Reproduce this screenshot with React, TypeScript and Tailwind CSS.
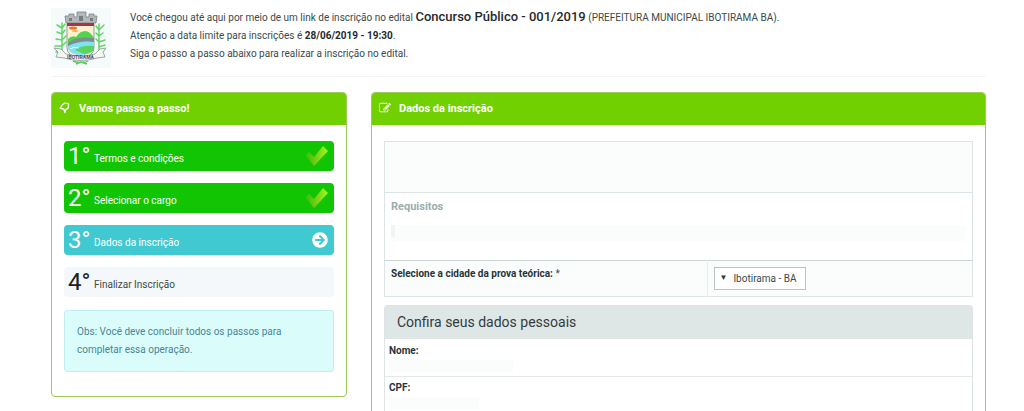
import type { ReactNode } from "react";
import clsx from "clsx";
import { FaArrowCircleRight } from "react-icons/fa";

type StepStatus = "done" | "current" | "pending";

const steps: { label: string; status: StepStatus }[] = [
  { label: "Termos e condições", status: "done" },
  { label: "Selecionar o cargo", status: "done" },
  { label: "Dados da inscrição", status: "current" },
  { label: "Finalizar Inscrição", status: "pending" },
];

export default function App() {
  return (
    <div className="min-h-screen bg-white pl-[51px] pr-[38px] font-['Roboto',sans-serif] text-[10px] text-[#3a4a4a]">
      <Header />
      <main className="flex items-start gap-6 pt-[15px]">
        <Panel
          title="Vamos passo a passo!"
          icon={<SignIcon />}
          className="w-[296px] shrink-0 pb-6"
        >
          <ol className="flex flex-col gap-3">
            {steps.map((step, index) => (
              <Step key={step.label} number={index + 1} {...step} />
            ))}
          </ol>
          <p className="mt-[13px] rounded-[3px] border border-[#c3eef0] bg-[#dafdfc] px-3 py-3 leading-[18px] text-[#4a8495]">
            Obs: Você deve concluir todos os passos para
            <br />
            completar essa operação.
          </p>
        </Panel>
        <Panel
          title="Dados da inscrição"
          icon={<EditIcon />}
          className="min-w-0 flex-1"
        >
          <RoleTable />
          <PersonalData />
        </Panel>
      </main>
    </div>
  );
}

const Header = () => (
  <header className="flex gap-[19px] border-b border-[#f3f4f4] pt-2 pb-2">
    <Crest />
    <div className="leading-[18px]">
      <p>
        Você chegou até aqui por meio de um link de inscrição no edital{" "}
        <strong className="text-[13px] font-medium text-[#1f2a2e]">
          Concurso Público - 001/2019
        </strong>{" "}
        (PREFEITURA MUNICIPAL IBOTIRAMA BA).
      </p>
      <p>
        Atenção a data limite para inscrições é{" "}
        <strong className="font-bold text-[#1f2a2e]">28/06/2019 - 19:30</strong>
        .
      </p>
      <p>Siga o passo a passo abaixo para realizar a inscrição no edital.</p>
    </div>
  </header>
);

const Panel = ({
  title,
  icon,
  className,
  children,
}: {
  title: string;
  icon: ReactNode;
  className?: string;
  children: ReactNode;
}) => (
  <section
    className={clsx("rounded-[4px] border border-[#9fc958]", className)}
  >
    <h2 className="flex h-8 items-center rounded-t-[3px] bg-[#70d000] px-[7px] text-[11px] font-bold text-white">
      <span className="w-5 pb-[2px]">{icon}</span>
      {title}
    </h2>
    <div className="px-3 pt-4">{children}</div>
  </section>
);

const Step = ({
  number,
  label,
  status,
}: {
  number: number;
  label: string;
  status: StepStatus;
}) => (
  <li
    className={clsx(
      "flex h-[30px] items-center rounded-[4px] pr-[6px] pl-1",
      status === "done" && "bg-[#12c502] text-white",
      status === "current" && "bg-[#41c9d1] text-white",
      status === "pending" && "bg-[#f5f8fa]",
    )}
  >
    <span
      className={clsx(
        "w-[26px] text-2xl leading-[30px]",
        status === "pending" && "text-[#1a2024]",
      )}
    >
      {number}°
    </span>
    <span className="flex-1 pt-1">{label}</span>
    {status === "done" && <CheckIcon />}
    {status === "current" && <FaArrowCircleRight size={16} />}
  </li>
);

const RoleTable = () => (
  <table className="w-full border-collapse border border-[#dde4e4]">
    <tbody>
      <tr className="h-[51px] bg-[#fbfdfd]">
        <td colSpan={2} />
      </tr>
      <tr className="h-[68px] border-t border-[#dde4e4]">
        <td colSpan={2} className="px-[6px] pt-1 align-top">
          <h3 className="text-[11px] leading-5 font-bold text-[#9aaeac]">
            Requisitos
          </h3>
          <div className="mt-2 h-4 bg-[#fbfdfd]">
            <div className="h-3 w-1 bg-[#f0f4f4]" />
          </div>
        </td>
      </tr>
      <tr className="h-9 border-t border-[#ccd5d5] bg-[#fbfdfd]">
        <td className="w-[55%] px-[6px] pt-1 align-top leading-[18px]">
          <label htmlFor="city">
            <strong className="font-bold text-[#27343a]">
              Selecione a cidade da prova teórica:
            </strong>{" "}
            *
          </label>
        </td>
        <td className="border-l border-[#e8eeee] px-[6px]">
          <div className="relative w-[92px]">
            <select
              id="city"
              className="block h-[23px] w-full appearance-none border border-[#b9c4c4] bg-white pl-[18px]"
            >
              <option>Ibotirama - BA</option>
            </select>
            <span className="pointer-events-none absolute top-[6px] left-[5px] text-[8px] leading-[10px] text-[#2b3a3a]">
              ▼
            </span>
          </div>
        </td>
      </tr>
    </tbody>
  </table>
);

const PersonalData = () => (
  <section className="mt-2 rounded-t-[3px] border border-[#dde4e4]">
    <h3 className="h-[33px] rounded-t-[2px] bg-[#dfe6e6] px-3 text-sm leading-[33px] text-[#2f3c40]">
      Confira seus dados pessoais
    </h3>
    <dl>
      <div className="h-[37px] px-1 pt-[3px]">
        <dt className="leading-[18px] font-bold text-[#27343a]">Nome:</dt>
        <dd className="h-3 w-[124px] bg-[#fafdfc]" />
      </div>
      <div className="h-[37px] border-t border-[#e4eaea] px-1 pt-[2px]">
        <dt className="leading-[18px] font-bold text-[#27343a]">CPF:</dt>
        <dd className="h-3 w-[90px] bg-[#fafdfc]" />
      </div>
    </dl>
  </section>
);

const SignIcon = () => (
  <svg width="12" height="12" viewBox="0 0 12 12" fill="none" aria-hidden="true">
    <path
      d="M3.500 2.500L6 1.200 9.600 1.800 9.200 6.200 6.800 7.600 6 10.500 4.800 7 1.200 6.400z"
      stroke="white"
      strokeWidth="1.300"
      strokeLinejoin="round"
    />
  </svg>
);

const EditIcon = () => (
  <svg width="12" height="12" viewBox="0 0 1792 1792" fill="white" aria-hidden="true">
    <path d="M888 1184l116-116-152-152-116 116v56h96v96h56zm440-720q-16-16-33 1l-350 350q-17 17-1 33t33-1l350-350q17-17 1-33zm80 594v190q0 119-84.5 203.5t-203.5 84.5h-832q-119 0-203.5-84.5t-84.5-203.5v-832q0-119 84.5-203.5t203.5-84.5h832q63 0 117 25 15 7 18 23 3 17-9 29l-49 49q-14 14-32 8-23-6-45-6h-832q-66 0-113 47t-47 113v832q0 66 47 113t113 47h832q66 0 113-47t47-113v-126q0-13 9-22l64-64q15-15 35-7t20 29zm-96-738l288 288-672 672h-288v-288zm444 132l-92 92-288-288 92-92q28-28 68-28t68 28l152 152q28 28 28 68t-28 68z" />
  </svg>
);

const CheckIcon = () => (
  <svg width="24" height="20" viewBox="0 0 24 20" aria-hidden="true">
    <defs>
      <linearGradient id="check" x1="0" y1="0" x2="1" y2="0">
        <stop offset="0" stopColor="#25c505" />
        <stop offset="0.400" stopColor="#6fc812" />
        <stop offset="1" stopColor="#9cfa1c" />
      </linearGradient>
    </defs>
    <path d="M1 9l4-3 5 5L19 0l5 5-14 15z" fill="url(#check)" />
  </svg>
);

const Crest = () => (
  <svg width="60" height="60" viewBox="0 0 60 60" role="img" aria-label="Ibotirama">
    <rect width="60" height="60" fill="#f5fafa" />
    {/* plants on both sides */}
    <g fill="none" stroke="#5fd765" strokeWidth="1.500" strokeLinecap="round">
      <path d="M11 46V15M11 20l-5-3M11 20l3-4M11 26l-5-2M11 26l3-4M11 32l-6-1M11 32l4-4M11 38l-7 0M11 38l4-4M11 43l-6 1" />
      <path d="M48 46V16M48 22l5-5M48 22l-3-4M48 28l4-3M48 28l-3-3M48 34l6-2M48 34l-3-3M48 39l6-2M48 44l5-2" />
    </g>
    {/* mural crown */}
    <path
      d="M15 15L14 8h4V6h5v3h3V4h9v5h3V6h5v2h3l-1 7z"
      fill="#b3b8bb"
      stroke="#7b8185"
      strokeWidth="0.800"
    />
    <path d="M18 10h3v3h-3zM28 8h4v5h-4zM39 10h3v3h-3z" fill="#767c80" />
    {/* shield */}
    <path
      d="M16 16h27v24q0 8-13.500 10Q16 48 16 40z"
      fill="#fbf0cf"
      stroke="#7e8386"
      strokeWidth="0.800"
    />
    <path d="M16 15h27v3H16z" fill="#a93342" />
    <ellipse cx="22" cy="20" rx="4" ry="1.500" fill="#f0703a" />
    <ellipse cx="24" cy="23" rx="3" ry="1" fill="#f5b043" />
    <path d="M17 31q4-4 8-2 4-6 9-6t9 7v10H17z" fill="#4fd450" />
    <path d="M17 35q8-7 26-5v4q-14-2-26 5z" fill="#7f8b8d" />
    <path d="M17 38q12-6 26-4v7q-4 6-13 6-10 0-13-6z" fill="#7fe2f3" />
    <path d="M24 42q6-5 19-4v4q-4 4-10 4z" fill="#5bd35c" />
    <path d="M19 41q4-3 9-1" stroke="white" fill="none" />
    {/* name ribbon */}
    <path
      d="M3 40l7 1 5 5q15 4 29 0l5-5 6-1-3 4 2 5-8 1q-16 5-33 0l-8-1 2-5z"
      fill="#f4f6f6"
      stroke="#8a9093"
      strokeWidth="0.800"
    />
    <text
      x="29.500"
      y="51"
      textAnchor="middle"
      fontSize="5"
      fontWeight="bold"
      fill="#4b4f66"
    >
      IBOTIRAMA
    </text>
    <path
      d="M22 53q4 2 8 1 4 1 7-1M25 56l5-2 6 2"
      fill="none"
      stroke="#55cd4d"
      strokeWidth="1.500"
    />
  </svg>
);
